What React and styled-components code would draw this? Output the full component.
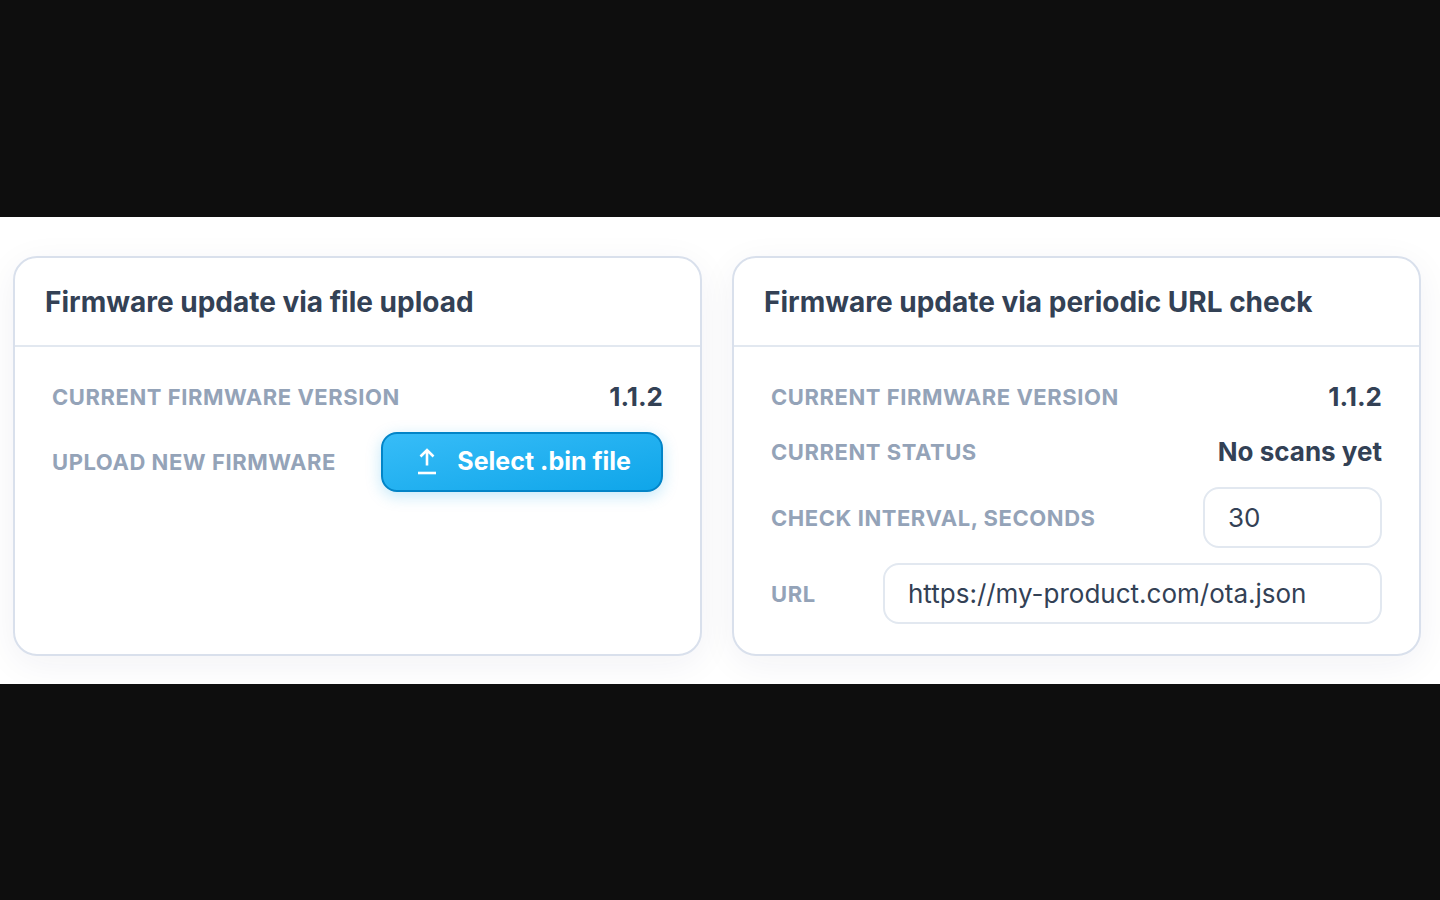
import React, { useRef, useState } from "react";
import styled, { createGlobalStyle } from "styled-components";

const GlobalStyle = createGlobalStyle`
  * {
    box-sizing: border-box;
  }
  body {
    margin: 0;
    background-color: #0e0e0e;
    font-family: Inter, "Liberation Sans", sans-serif;
    color: #334155;
  }
`;

const Page = styled.div`
  min-height: 100vh;
  display: flex;
  flex-direction: column;
  justify-content: center;
  padding-top: 1px;
`;

const Main = styled.main`
  display: grid;
  grid-template-columns: repeat(2, minmax(0, 1fr));
  gap: 30px;
  padding: 39px 19px 28px 13px;
  background-color: #fff;
  overflow: hidden;
  @media (max-width: 955px) {
    grid-template-columns: minmax(0, 1fr);
  }
`;

const Card = styled.section`
  border: 2px solid #d9e0ec;
  border-radius: 24px;
  background-color: #fff;
  box-shadow: 0 8px 36px rgba(30, 41, 80, 0.06);
`;

const CardHeader = styled.header`
  padding: 25px 30px 23px;
  border-bottom: 2px solid #e2e8f0;
`;

const Title = styled.h2`
  margin: 0;
  font-size: 28px;
  line-height: 39px;
  font-weight: 700;
`;

const CardBody = styled.div`
  display: flex;
  flex-direction: column;
  gap: 15px;
  padding: 30px 37px;
`;

const Row = styled.div`
  display: flex;
  align-items: center;
  justify-content: space-between;
  gap: 45px;
  min-height: 40px;
`;

const Label = styled.label`
  font-size: 22px;
  line-height: 30px;
  font-weight: 700;
  letter-spacing: 0.025em;
  text-transform: uppercase;
  white-space: nowrap;
  color: #94a3b8;
`;

const Value = styled.output`
  font-size: 26px;
  line-height: 40px;
  font-weight: 700;
  white-space: nowrap;
`;

const UploadButton = styled.button`
  display: flex;
  align-items: center;
  gap: 16px;
  height: 60px;
  padding: 0 30px 2px;
  border: 2px solid #0284c7;
  border-radius: 16px;
  background: linear-gradient(to bottom right, #38bdf8, #0ea5e9) border-box;
  box-shadow: 0 4px 15px rgba(14, 165, 233, 0.25);
  color: #fff;
  font-family: inherit;
  font-size: 25px;
  font-weight: 700;
  white-space: nowrap;
  cursor: pointer;
`;

const Input = styled.input`
  width: ${(props) => props.$width};
  min-width: 0;
  height: 61px;
  padding: 0 23px;
  border: 2px solid #e2e8f0;
  border-radius: 16px;
  background-color: #fff;
  color: inherit;
  font-family: inherit;
  font-size: 26px;
  outline: none;
  &:focus {
    border-color: #38bdf8;
  }
`;

const UploadIcon = () => (
  <svg width="28" height="28" viewBox="0 0 28 28" fill="none" stroke="#fff" strokeWidth="2.6" aria-hidden="true">
    <path d="M14 18.5V3.5M7.5 9.5L14 3L20.5 9.5" />
    <path d="M5 26H23" />
  </svg>
);

const App = () => {
  const [interval, setInterval] = useState("30");
  const [url, setUrl] = useState("https://my-product.com/ota.json");
  const fileRef = useRef(null);

  return (
    <Page>
      <GlobalStyle />
      <Main>
        <Card>
          <CardHeader>
            <Title>Firmware update via file upload</Title>
          </CardHeader>
          <CardBody>
            <Row>
              <Label htmlFor="file-version">Current firmware version</Label>
              <Value id="file-version">1.1.2</Value>
            </Row>
            <Row>
              <Label htmlFor="file-upload">Upload new firmware</Label>
              <UploadButton id="file-upload" type="button" onClick={() => fileRef.current.click()}>
                <UploadIcon />
                Select .bin file
              </UploadButton>
              <input ref={fileRef} type="file" accept=".bin" hidden />
            </Row>
          </CardBody>
        </Card>
        <Card>
          <CardHeader>
            <Title>Firmware update via periodic URL check</Title>
          </CardHeader>
          <CardBody>
            <Row>
              <Label htmlFor="url-version">Current firmware version</Label>
              <Value id="url-version">1.1.2</Value>
            </Row>
            <Row>
              <Label htmlFor="status">Current status</Label>
              <Value id="status">No scans yet</Value>
            </Row>
            <Row>
              <Label htmlFor="interval">Check interval, seconds</Label>
              <Input
                id="interval"
                inputMode="numeric"
                $width="179px"
                value={interval}
                onChange={(e) => setInterval(e.target.value)}
              />
            </Row>
            <Row>
              <Label htmlFor="url">URL</Label>
              <Input id="url" $width="499px" value={url} onChange={(e) => setUrl(e.target.value)} />
            </Row>
          </CardBody>
        </Card>
      </Main>
    </Page>
  );
};

export default App;
